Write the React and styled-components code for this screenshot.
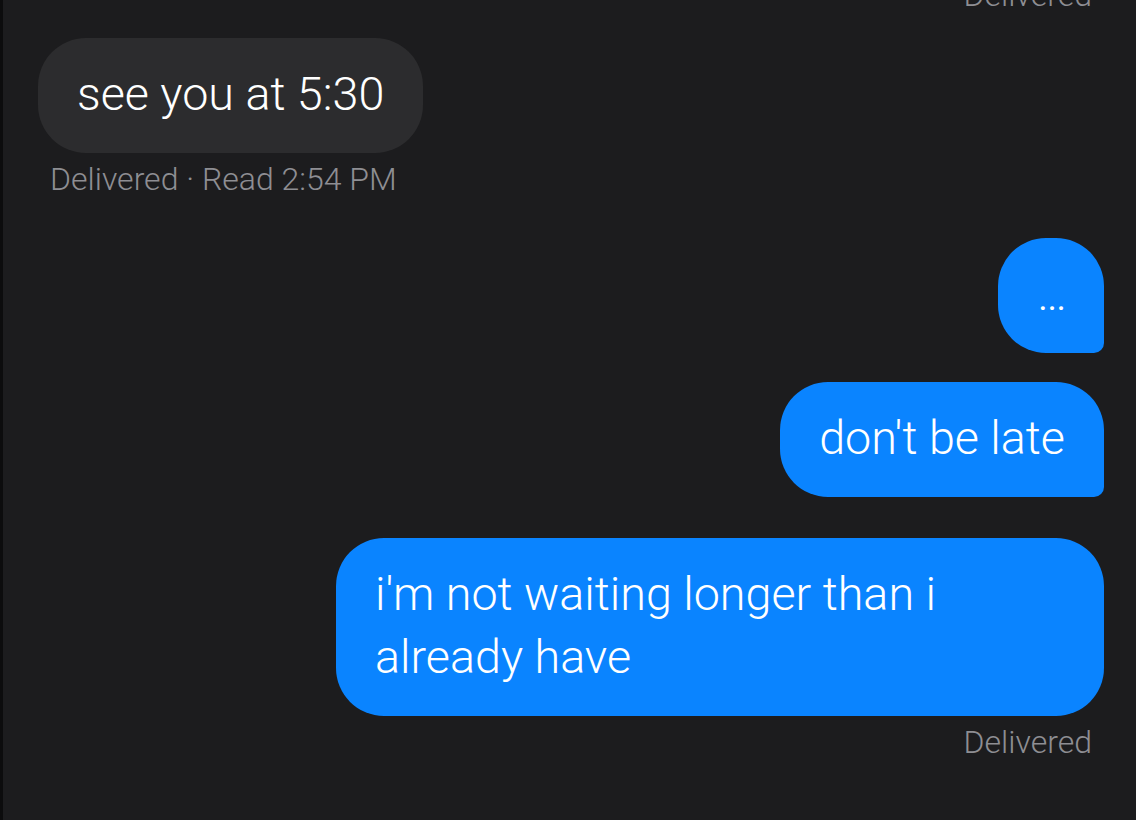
import React from "react";
import styled, { createGlobalStyle } from "styled-components";

const GlobalStyle = createGlobalStyle`
  html, body {
    margin: 0;
    padding: 0;
    background: #1c1c1e;
  }
  body {
    font-family: Roboto, "Noto Sans", "Liberation Sans", sans-serif;
    -webkit-font-smoothing: antialiased;
  }
`;

const Screen = styled.div`
  height: 820px;
  overflow: hidden;
  background: #1c1c1e;
  border-left: 3px solid #0c0c0d;
  box-sizing: border-box;
`;

const Thread = styled.div`
  display: flex;
  flex-direction: column;
  padding: 0 32px 0 35px;
`;

const Row = styled.div`
  display: flex;
  justify-content: ${(p) => (p.$mine ? "flex-end" : "flex-start")};
  margin-top: ${(p) => p.$gap || 0}px;
`;

const Bubble = styled.div`
  max-width: 690px;
  padding: 25px 39px 27px;
  font-size: 46.7px;
  font-weight: 300;
  line-height: 63px;
  color: #ffffff;
  background: ${(p) => (p.$mine ? "#0a84ff" : "#2c2c2e")};
  border-radius: 48px;
  border-bottom-right-radius: ${(p) => (p.$grouped ? "10px" : "48px")};
  letter-spacing: ${(p) => (p.$dots ? "-2px" : "normal")};
  word-wrap: break-word;
`;

const Meta = styled.div`
  font-size: 32px;
  font-weight: 300;
  line-height: 36px;
  color: #8e8e93;
  margin-top: ${(p) => p.$gap || 0}px;
  padding: 0 12px;
  text-align: ${(p) => (p.$mine ? "right" : "left")};
`;

const messages = [
  { id: 1, mine: false, text: "see you at 5:30", gap: 25, meta: "Delivered · Read 2:54 PM" },
  { id: 2, mine: true, text: "...", gap: 41, grouped: true, dots: true },
  { id: 3, mine: true, text: "don't be late", gap: 29, grouped: true },
  { id: 4, mine: true, text: "i'm not waiting longer than i already have", gap: 41, meta: "Delivered" },
];

export default function App() {
  return (
    <>
      <GlobalStyle />
      <Screen>
        <Thread>
          <Meta $mine $gap={-23}>Delivered</Meta>
          {messages.map((m) => (
            <React.Fragment key={m.id}>
              <Row $mine={m.mine} $gap={m.gap}>
                <Bubble $mine={m.mine} $grouped={m.grouped} $dots={m.dots}>
                  {m.text}
                </Bubble>
              </Row>
              {m.meta && (
                <Meta $mine={m.mine} $gap={8}>
                  {m.meta}
                </Meta>
              )}
            </React.Fragment>
          ))}
        </Thread>
      </Screen>
    </>
  );
}
